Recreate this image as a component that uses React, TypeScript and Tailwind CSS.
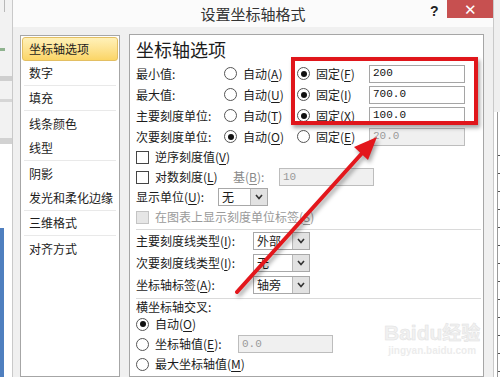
import React from 'react';

function K({ c }: { c: string }) {
  return (
    <>
      (<u className="underline-offset-[2px]">{c}</u>)
    </>
  );
}

function Radio({ checked }: { checked?: boolean }) {
  return (
    <span className="flex h-[13px] w-[13px] shrink-0 items-center justify-center rounded-full border border-[#555] bg-white">
      {checked && <span className="h-[6px] w-[6px] rounded-full bg-[#111]" />}
    </span>
  );
}

function Check({ disabled }: { disabled?: boolean }) {
  return (
    <span
      className={`h-[13px] w-[13px] shrink-0 border ${disabled ? 'border-[#c4c4c4] bg-[#e6e6e6]' : 'border-[#444] bg-white'}`}
    />
  );
}

function Field({ value, disabled, w = 'w-[96px]' }: { value: string; disabled?: boolean; w?: string }) {
  return (
    <span
      className={`flex h-[18px] ${w} items-center border pl-[3px] font-['Liberation_Mono',monospace] text-[11px] ${
        disabled ? 'border-[#bdbdbd] bg-[#f0f0f0] text-[#9a9a9a]' : 'border-[#a5a5a5] bg-white text-[#111]'
      }`}
    >
      {value}
    </span>
  );
}

function Select({ value, w }: { value: string; w: string }) {
  return (
    <span className={`flex h-[18px] ${w} border border-[#a8a8a8] bg-white`}>
      <span className="flex flex-1 items-center pl-[3px]">{value}</span>
      <span className="flex w-[17px] items-center justify-center border-l border-[#b8b8b8] bg-[#e2e2e2]">
        <svg width="8" height="6" viewBox="0 0 8 6">
          <polyline points="1,1 4,4.5 7,1" fill="none" stroke="#333" strokeWidth="1.6" />
        </svg>
      </span>
    </span>
  );
}

interface AxisRowProps {
  label: string;
  autoKey: string;
  fixKey: string;
  value: string;
  auto?: boolean;
}

function AxisRow({ label, autoKey, fixKey, value, auto }: AxisRowProps) {
  return (
    <div className="flex h-[21px] items-center">
      <span className="w-[88px]">{label}</span>
      <span className="flex w-[73px] items-center gap-[6px]">
        <Radio checked={auto} />
        <span>
          自动<K c={autoKey} />
        </span>
      </span>
      <span className="flex w-[72px] items-center gap-[6px]">
        <Radio checked={!auto} />
        <span>
          固定<K c={fixKey} />
        </span>
      </span>
      <Field value={value} disabled={auto} />
    </div>
  );
}

const navItems = [
  { label: '坐标轴选项', line: false },
  { label: '数字', line: true },
  { label: '填充', line: true },
  { label: '线条颜色', line: false },
  { label: '线型', line: true },
  { label: '阴影', line: false },
  { label: '发光和柔化边缘', line: true },
  { label: '三维格式', line: true },
  { label: '对齐方式', line: false },
];

export default function App() {
  return (
    <div className="relative flex h-[377px] w-[500px] overflow-hidden bg-white font-['Noto_Sans_CJK_SC',sans-serif] text-[12px] leading-none text-[#1c1c1c]">
      {/* excel behind, left */}
      <div className="flex w-[12px] flex-col bg-[#f2f2f2]">
        <div className="h-[12px] w-[5px] border-r border-[#b9b9b9]" />
        <div className="h-[36px]" />
        <div className="h-[3px] w-[5px] bg-[#8fb38f]" />
        <div className="h-[25px]" />
        <div className="h-[5px] bg-[#cfcfcf]" />
        <div className="h-[18px]" />
        <div className="h-[3px] bg-[#d6d6d6]" />
        <div className="h-[36px]" />
        <div className="h-[6px] bg-[#d2d2d2]" />
        <div className="h-[84px] bg-white" />
        <div className="flex flex-1">
          <div className="w-[4px] bg-[#4f7fbf]" />
          <div className="flex-1 bg-white" />
        </div>
      </div>

      {/* dialog */}
      <div className="flex w-[482px] flex-col border-x border-[#c9c9c9] bg-[#f0f0f0]">
        <div className="relative flex h-[27px] shrink-0 items-center justify-center bg-[#fbfbfb]">
          <span className="text-[15px] text-[#333]">设置坐标轴格式</span>
          <span className="absolute left-[417px] top-[4px] font-['Liberation_Sans',sans-serif] text-[14px] font-bold text-[#222]">?</span>
          <span className="absolute left-[434px] top-0 flex h-[18px] w-[46px] items-center justify-center bg-[#c75050] font-['Liberation_Sans',sans-serif] text-[15px] text-white">
            ✕
          </span>
        </div>

        <div className="flex flex-1 gap-[9px] pl-[7px] pt-[7px]">
          {/* nav */}
          <div className="mt-[1px] w-[100px] border border-[#a6a6a6] bg-white p-[1px]">
            {navItems.map((n, i) =>
              i === 0 ? (
                <div
                  key={n.label}
                  className="flex h-[24px] items-center rounded-[3px] border border-[#e3bf63] bg-gradient-to-b from-[#fff1b8] to-[#fbd565] pl-[6px]"
                >
                  {n.label}
                </div>
              ) : (
                <div
                  key={n.label}
                  className={`mx-[2px] flex h-[25px] items-center pl-[5px] ${n.line ? 'border-b border-[#e9e9e9]' : ''}`}
                >
                  {n.label}
                </div>
              )
            )}
          </div>

          {/* content */}
          <div className="w-[355px] border border-[#a6a6a6] bg-white pl-[6px]">
            <div className="flex h-[28px] items-center text-[18px]">坐标轴选项</div>
            <AxisRow label="最小值:" autoKey="A" fixKey="F" value="200" />
            <AxisRow label="最大值:" autoKey="U" fixKey="I" value="700.0" />
            <AxisRow label="主要刻度单位:" autoKey="T" fixKey="X" value="100.0" />
            <AxisRow label="次要刻度单位:" autoKey="O" fixKey="E" value="20.0" auto />

            <div className="flex h-[20px] items-center gap-[6px]">
              <Check />
              <span>
                逆序刻度值<K c="V" />
              </span>
            </div>
            <div className="flex h-[20px] items-center">
              <Check />
              <span className="ml-[6px] w-[78px]">
                对数刻度<K c="L" />
              </span>
              <span className="w-[46px] text-[#8a8a8a]">
                基<K c="B" />:
              </span>
              <Field value="10" disabled w="w-[95px]" />
            </div>
            <div className="flex h-[20px] items-center">
              <span className="w-[82px]">
                显示单位<K c="U" />:
              </span>
              <Select value="无" w="w-[50px]" />
            </div>
            <div className="flex h-[20px] items-center gap-[6px] text-[#9a9a9a]">
              <Check disabled />
              <span>
                在图表上显示刻度单位标签<K c="S" />
              </span>
            </div>

            <div className="mt-[2px] h-px w-[345px] bg-[#dadada]" />

            <div className="flex h-[22px] items-center">
              <span className="w-[117px]">
                主要刻度线类型<K c="I" />:
              </span>
              <Select value="外部" w="w-[57px]" />
            </div>
            <div className="flex h-[22px] items-center">
              <span className="w-[117px]">
                次要刻度线类型<K c="I" />:
              </span>
              <Select value="无" w="w-[57px]" />
            </div>
            <div className="flex h-[22px] items-center">
              <span className="w-[117px]">
                坐标轴标签<K c="A" />:
              </span>
              <Select value="轴旁" w="w-[57px]" />
            </div>

            <div className="mt-[2px] h-px w-[345px] bg-[#dadada]" />

            <div className="flex h-[15px] items-center">横坐标轴交叉:</div>
            <div className="flex h-[20px] items-center gap-[6px]">
              <Radio checked />
              <span>
                自动<K c="O" />
              </span>
            </div>
            <div className="flex h-[20px] items-center">
              <Radio />
              <span className="ml-[6px] w-[83px]">
                坐标轴值<K c="E" />:
              </span>
              <Field value="0.0" disabled w="w-[95px]" />
            </div>
            <div className="flex h-[20px] items-center gap-[6px]">
              <Radio />
              <span>
                最大坐标轴值<K c="M" />
              </span>
            </div>
          </div>
        </div>
      </div>

      {/* excel behind, right */}
      <div className="flex w-[6px] flex-col bg-white">
        <div className="h-[112px] bg-[#efefef]" />
        <div className="flex flex-1 flex-col border-l-[3px] border-white">
          <div className="flex h-full flex-col border-l border-[#9a9a9a] pt-[26px]">
            {Array.from({ length: 13 }).map((_, i) => (
              <div key={i} className="h-[18px] w-[3px] border-b border-[#555]" />
            ))}
          </div>
        </div>
      </div>

      {/* watermark */}
      <div className="pointer-events-none absolute left-[384px] top-[322px] flex flex-col items-center text-[#f1f1f1]">
        <span className="font-['Liberation_Sans',sans-serif] text-[21px] font-bold leading-none [-webkit-text-stroke:0.5px_#e2e2e2]">
          Baidu<span className="font-['Noto_Sans_CJK_SC',sans-serif] text-[19px]">经验</span>
        </span>
        <span className="mt-[3px] font-['Liberation_Sans',sans-serif] text-[10px] font-bold leading-none text-[#ececec]">jingyan.baidu.com</span>
      </div>

      {/* red highlight */}
      <div className="pointer-events-none absolute left-[291px] top-[57px] h-[68px] w-[187px] border-[4px] border-[#e0161b] shadow-[2px_3px_4px_rgba(0,0,0,0.35)]" />

      {/* arrow */}
      <svg
        className="pointer-events-none absolute left-0 top-0 drop-shadow-[2px_3px_2px_rgba(0,0,0,0.35)]"
        width="500"
        height="377"
        viewBox="0 0 500 377"
      >
        <line x1="237" y1="292" x2="364" y2="151" stroke="#e3171c" strokeWidth="4" strokeLinecap="round" />
        <polygon points="377,137 354,147 368,160" fill="#e3171c" />
      </svg>
    </div>
  );
}
